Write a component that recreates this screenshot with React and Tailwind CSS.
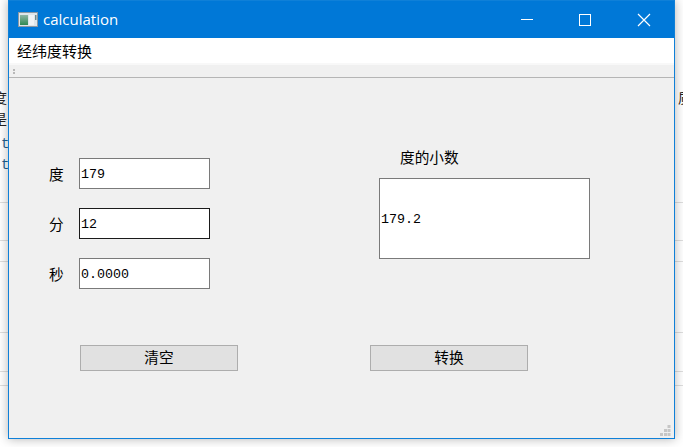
const cjk = "font-['Noto_Sans_CJK_SC',sans-serif]"
const mono = "font-['Liberation_Mono','Noto_Sans_CJK_SC',monospace]"

const fields = [
  { label: "度", value: "179" },
  { label: "分", value: "12", focused: true },
  { label: "秒", value: "0.0000" },
]

const AppIcon = () => (
  <svg width="20" height="15" viewBox="0 0 20 15">
    <defs>
      <linearGradient id="pane" x1="0" y1="0" x2="0" y2="1">
        <stop offset="0" stopColor="#8fb5a5" />
        <stop offset="1" stopColor="#2f8a52" />
      </linearGradient>
    </defs>
    <rect x="0.5" y="0.5" width="19" height="14" fill="#dfe6ea" stroke="#8b98a3" />
    <rect x="2" y="3" width="8" height="10" fill="url(#pane)" />
    <rect x="11" y="3" width="5" height="10" fill="#f1f4f6" />
    <rect x="17" y="3" width="1.5" height="5" fill="#6d8a8f" />
  </svg>
)

const TitleBar = () => (
  <div className="flex h-[37px] shrink-0 items-center bg-[#0078d7] text-white">
    <div className="ml-[9px] flex items-center">
      <AppIcon />
    </div>
    <span className="ml-[5px] font-['Open_Sans',sans-serif] text-[15px] leading-none">calculation</span>
    <div className="ml-auto flex items-center">
      <svg width="46" height="37" viewBox="0 0 46 37" className="mr-[12px]">
        <path d="M11 18.5h12" stroke="#fff" strokeWidth="1" />
      </svg>
      <svg width="46" height="37" viewBox="0 0 46 37" className="mr-[13px]">
        <rect x="11.5" y="13.5" width="11" height="11" fill="none" stroke="#fff" />
      </svg>
      <svg width="46" height="37" viewBox="0 0 46 37" className="mr-[1px]">
        <path d="M11 13l12 12M23 13L11 25" stroke="#fff" strokeWidth="1.2" fill="none" />
      </svg>
    </div>
  </div>
)

const Grip = () => (
  <svg width="11" height="11" viewBox="0 0 11 11" className="absolute right-[3px] bottom-[2px]" fill="#c6c6c6">
    <rect x="7.5" y="0" width="3" height="3" />
    <rect x="4" y="4" width="3" height="3" />
    <rect x="7.5" y="4" width="3" height="3" />
    <rect x="0" y="8" width="3" height="3" />
    <rect x="4" y="8" width="3" height="3" />
    <rect x="7.5" y="8" width="3" height="3" />
  </svg>
)

const Backdrop = () => (
  <div className="absolute inset-0 bg-white">
    <div className={`absolute top-[87px] left-[-7px] text-[14px] leading-[21px] text-[#222] ${cjk}`}>
      <div>度</div>
      <div>是</div>
    </div>
    <div className="absolute top-[134px] left-[1px] font-['Liberation_Mono',monospace] text-[14px] leading-[21px] text-[#1f5f8f]">
      <div>t</div>
      <div>t</div>
    </div>
    <div className={`absolute top-[87px] right-[-9px] text-[14px] leading-[21px] text-[#222] ${cjk}`}>质</div>
    {[202, 240, 261, 332, 371, 385].map((y) => (
      <div key={y} className="absolute left-0 h-px w-full bg-[#dedede]" style={{ top: y }} />
    ))}
  </div>
)

const Button = ({ children }) => (
  <button className={`h-[26px] w-[158px] border border-[#adadad] bg-[#e1e1e1] pb-[2px] text-[14.67px] leading-none text-black ${cjk}`}>
    {children}
  </button>
)

const App = () => {
  return (
    <div className="relative h-[447px] w-[683px] overflow-hidden">
      <Backdrop />
      <div className="relative ml-[8px] flex h-[439px] w-[667px] flex-col border border-[#0f80d8] bg-[#f0f0f0] shadow-[0_0_10px_rgba(0,0,0,0.3)]">
        <TitleBar />
        <div className={`h-[25px] shrink-0 bg-white pl-[8px] text-[15px] leading-[25px] text-black ${cjk}`}>
          经纬度转换
        </div>
        <div className="flex h-[15px] shrink-0 items-center border-t-2 border-b border-t-[#f8f8f8] border-b-[#b5b5b5] bg-[#f0f0f0] pl-[4px]">
          <div className="h-[5px] w-[2px] border-y-2 border-y-[#b8b8b8]" />
        </div>
        <div className="flex h-[216px] shrink-0">
          <div className="flex flex-col gap-[19px] pt-[80px] pl-[40px]">
            {fields.map((f) => (
              <div key={f.label} className="flex items-center">
                <span className={`w-[30px] text-[14.67px] text-black ${cjk}`}>{f.label}</span>
                <input
                  readOnly
                  value={f.value}
                  className={`h-[31px] w-[131px] border bg-white pt-[1px] pl-[1px] text-[13.33px] text-black outline-none ${mono} ${
                    f.focused ? "border-[#1a1a1a]" : "border-[#7a7a7a]"
                  }`}
                />
              </div>
            ))}
          </div>
          <div className="ml-[169px] flex flex-col pt-[68px]">
            <span className={`h-[32px] pl-[21px] text-[14.67px] leading-[21px] text-black ${cjk}`}>度的小数</span>
            <div className={`flex h-[81px] w-[211px] items-center border border-[#7a7a7a] bg-white pt-[3px] pl-[1px] text-[13.33px] text-black ${mono}`}>
              179.2
            </div>
          </div>
        </div>
        <div className="flex gap-[132px] pt-[51px] pl-[71px]">
          <Button>清空</Button>
          <Button>转换</Button>
        </div>
        <Grip />
      </div>
    </div>
  )
}

export default App
